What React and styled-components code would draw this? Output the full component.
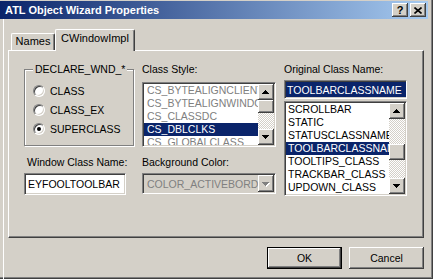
import React from "react";
import styled, { createGlobalStyle, css } from "styled-components";

const GlobalStyle = createGlobalStyle`
  html, body { margin: 0; padding: 0; background: #d4d0c8; }
  body { font-family: "Liberation Sans", Arial, sans-serif; }
  * { box-sizing: border-box; }
`;

const NAVY = "#0a246a";
const FACE = "#d4d0c8";

const raised = css`
  background: ${FACE};
  box-shadow: inset -1px -1px #404040, inset 1px 1px #fff, inset -2px -2px #808080, inset 2px 2px ${FACE};
`;

const sunken = css`
  border: 1px solid;
  border-color: #808080 #fff #fff #808080;
  box-shadow: inset 1px 1px #404040, inset -1px -1px ${FACE};
  padding: 1px;
`;

const Window = styled.div`
  width: 433px;
  height: 279px;
  padding-top: 1px;
  background: ${FACE};
  display: flex;
  flex-direction: column;
  box-shadow: inset -1px -1px #404040, inset -2px -2px #808080;
`;

const TitleBar = styled.div`
  height: 18px;
  margin-right: 5px;
  padding: 0 2px 0 5px;
  display: flex;
  align-items: center;
  background: linear-gradient(90deg, ${NAVY} 0%, #a6caf0 100%);
  color: #fff;
  font: bold 11px "Liberation Sans", Arial, sans-serif;
`;

const TitleText = styled.div`
  flex: 1;
  white-space: nowrap;
`;

const CaptionButton = styled.div`
  ${raised};
  width: 16px;
  height: 14px;
  margin-left: ${(p) => p.$gap || 0}px;
  display: flex;
  align-items: center;
  justify-content: center;
  color: #000;
  font: bold 11px "Liberation Sans", Arial, sans-serif;
  line-height: 14px;
`;

const Body = styled.div`
  flex: 1;
  margin-left: 3px;
  border-left: 1px solid #fff;
  padding: 10px 0 0 4px;
  display: flex;
  flex-direction: column;
`;

const TabStrip = styled.div`
  display: flex;
  align-items: flex-end;
  padding-left: 3px;
  height: 21px;
`;

const Tab = styled.div`
  width: ${(p) => p.$w}px;
  height: ${(p) => (p.$active ? 22 : 17)}px;
  margin-bottom: ${(p) => (p.$active ? -1 : 0)}px;
  padding-top: ${(p) => (p.$active ? 2 : 1)}px;
  position: relative;
  z-index: ${(p) => (p.$active ? 2 : 1)};
  background: ${FACE};
  border-top: 1px solid #fff;
  border-left: 1px solid #fff;
  border-right: 1px solid #404040;
  border-radius: 2px 2px 0 0;
  box-shadow: inset -1px 0 #808080;
  text-align: center;
  font-size: 11px;
  line-height: 13px;
  color: #000;
  white-space: nowrap;
`;

const Panel = styled.div`
  width: 416px;
  height: 188px;
  border-top: 1px solid #fff;
  border-left: 1px solid #fff;
  border-right: 1px solid #404040;
  border-bottom: 1px solid #404040;
  box-shadow: inset -1px -1px #808080;
  padding: 12px 0 0 15px;
  display: grid;
  grid-template-columns: 110px 134px 123px;
  column-gap: 8px;
  align-items: start;
`;

const Column = styled.div`
  display: flex;
  flex-direction: column;
  align-items: flex-start;
`;

const Label = styled.div`
  margin-top: ${(p) => p.$mt || 0}px;
  padding-left: ${(p) => p.$indent || 0}px;
  font-size: 10.5px;
  line-height: 13px;
  color: #000;
  white-space: nowrap;
`;

const GroupBox = styled.div`
  width: 110px;
  height: 77px;
  margin-top: 6px;
  border: 1px solid #808080;
  box-shadow: inset 1px 1px #fff, 1px 1px #fff;
  display: flex;
  flex-direction: column;
  align-items: flex-start;
`;

const GroupCaption = styled.div`
  margin: -7px 0 0 8px;
  padding: 0 2px;
  background: ${FACE};
  font-size: 10.5px;
  line-height: 13px;
  white-space: nowrap;
`;

const RadioList = styled.div`
  margin-top: 5px;
  padding-left: 8px;
  display: flex;
  flex-direction: column;
`;

const RadioRow = styled.div`
  height: 19px;
  display: flex;
  align-items: center;
  gap: 5px;
  font-size: 10.5px;
`;

const RadioCircle = styled.span`
  width: 12px;
  height: 12px;
  border-radius: 50%;
  border: 1px solid;
  border-color: #808080 #fff #fff #808080;
  box-shadow: inset 1px 1px #404040, inset -1px -1px ${FACE};
  background: #fff;
  display: flex;
  align-items: center;
  justify-content: center;
  &::after {
    content: "";
    width: 4px;
    height: 4px;
    border-radius: 50%;
    background: ${(p) => (p.$checked ? "#000" : "transparent")};
  }
`;

const Edit = styled.div`
  ${sunken};
  width: ${(p) => p.$w}px;
  height: ${(p) => p.$h}px;
  margin-top: ${(p) => p.$mt || 0}px;
  background: #fff;
  display: flex;
  align-items: ${(p) => (p.$sel ? "stretch" : "center")};
  padding-left: ${(p) => (p.$sel ? 1 : 3)}px;
  font-size: 10.5px;
  white-space: nowrap;
  overflow: hidden;
`;

const Selection = styled.span`
  background: ${NAVY};
  color: #fff;
  padding: 0 4px 0 1px;
  display: flex;
  align-items: center;
`;

const ListBox = styled.div`
  ${sunken};
  width: ${(p) => p.$w}px;
  height: ${(p) => p.$h}px;
  margin-top: ${(p) => p.$mt || 0}px;
  background: #fff;
  display: flex;
`;

const Items = styled.div`
  flex: 1;
  min-width: 0;
  overflow: hidden;
`;

const Item = styled.div`
  height: 13px;
  line-height: 13px;
  padding-left: ${(p) => p.$pad}px;
  font-size: 10.5px;
  white-space: nowrap;
  overflow: hidden;
  color: ${(p) => (p.$sel ? "#fff" : p.$color)};
  background: ${(p) => (p.$sel ? NAVY : "transparent")};
`;

const ScrollBar = styled.div`
  width: 16px;
  display: flex;
  flex-direction: column;
`;

const ScrollButton = styled.div`
  ${raised};
  width: 16px;
  height: 16px;
  flex: none;
  display: flex;
`;

const Thumb = styled.div`
  ${raised};
  height: ${(p) => p.$h}px;
  flex: none;
`;

const Track = styled.div`
  flex: ${(p) => (p.$h ? "none" : 1)};
  height: ${(p) => (p.$h ? `${p.$h}px` : "auto")};
  background: repeating-conic-gradient(#fff 0 25%, ${FACE} 0 50%) 0 0 / 2px 2px;
`;

const Combo = styled.div`
  ${sunken};
  width: 134px;
  height: 21px;
  margin-top: 4px;
  background: ${FACE};
  display: flex;
  align-items: stretch;
`;

const ComboText = styled.div`
  flex: 1;
  min-width: 0;
  padding-left: 3px;
  display: flex;
  align-items: center;
  font-size: 10.5px;
  color: #808080;
  white-space: nowrap;
  overflow: hidden;
`;

const ComboButton = styled.div`
  ${raised};
  width: 16px;
  flex: none;
  display: flex;
`;

const ButtonRow = styled.div`
  width: 416px;
  margin-top: 9px;
  display: flex;
  justify-content: flex-end;
  gap: 7px;
`;

const PushButton = styled.div`
  width: 75px;
  height: 22px;
  display: flex;
  align-items: center;
  justify-content: center;
  font-size: 10.5px;
  color: #000;
  background: ${FACE};
  ${(p) =>
    p.$default
      ? css`
          border: 1px solid #000;
          box-shadow: inset -1px -1px #404040, inset 1px 1px #fff, inset -2px -2px #808080;
        `
      : css`
          box-shadow: inset -1px -1px #404040, inset 1px 1px #fff, inset -2px -2px #808080, inset 2px 2px ${FACE};
        `}
`;

const ArrowSvg = ({ dir = "up", disabled }) => {
  const up = "M7 6h1v1h1v1h1v1h1v1H4V9h1V8h1V7h1z";
  const down = "M4 6h7v1h-1v1h-1v1h-1v1H7V9H6V8H5V7H4z";
  const d = dir === "up" ? up : down;
  return (
    <svg width="16" height="16" viewBox="0 0 16 16" shapeRendering="crispEdges" style={{ display: "block", margin: "auto" }}>
      {disabled && <path d={d} fill="#fff" transform="translate(1 1)" />}
      <path d={d} fill={disabled ? "#808080" : "#000"} />
    </svg>
  );
};

const CloseGlyph = () => (
  <svg width="8" height="7" viewBox="0 0 8 7">
    <path d="M0.5 0.5 L7.5 6.5 M7.5 0.5 L0.5 6.5" stroke="#000" strokeWidth="1.6" />
  </svg>
);

const classStyles = ["CS_BYTEALIGNCLIENT", "CS_BYTEALIGNWINDOW", "CS_CLASSDC", "CS_DBLCLKS", "CS_GLOBALCLASS"];
const classNames = ["SCROLLBAR", "STATIC", "STATUSCLASSNAME", "TOOLBARCLASSNAME", "TOOLTIPS_CLASS", "TRACKBAR_CLASS", "UPDOWN_CLASS"];
const radios = [
  { label: "CLASS", checked: false },
  { label: "CLASS_EX", checked: false },
  { label: "SUPERCLASS", checked: true },
];

export default function App() {
  return (
    <>
      <GlobalStyle />
      <Window>
        <TitleBar>
          <TitleText>ATL Object Wizard Properties</TitleText>
          <CaptionButton>?</CaptionButton>
          <CaptionButton $gap={2}>
            <CloseGlyph />
          </CaptionButton>
        </TitleBar>
        <Body>
          <TabStrip>
            <Tab $w={44}>Names</Tab>
            <Tab $w={80} $active>
              CWindowImpl
            </Tab>
          </TabStrip>
          <Panel>
            <Column>
              <GroupBox>
                <GroupCaption>DECLARE_WND_*</GroupCaption>
                <RadioList>
                  {radios.map((r) => (
                    <RadioRow key={r.label}>
                      <RadioCircle $checked={r.checked} />
                      {r.label}
                    </RadioRow>
                  ))}
                </RadioList>
              </GroupBox>
              <Label $mt={10} $indent={3}>
                Window Class Name:
              </Label>
              <Edit $w={102} $h={22} $mt={4}>
                EYFOOLTOOLBAR
              </Edit>
            </Column>
            <Column>
              <Label>Class Style:</Label>
              <ListBox $w={134} $h={65} $mt={6}>
                <Items>
                  {classStyles.map((s) => (
                    <Item key={s} $pad={3} $color="#808080" $sel={s === "CS_DBLCLKS"}>
                      {s}
                    </Item>
                  ))}
                </Items>
                <ScrollBar>
                  <ScrollButton>
                    <ArrowSvg dir="up" />
                  </ScrollButton>
                  <Thumb $h={13} />
                  <Track />
                  <ScrollButton>
                    <ArrowSvg dir="down" />
                  </ScrollButton>
                </ScrollBar>
              </ListBox>
              <Label $mt={9}>Background Color:</Label>
              <Combo>
                <ComboText>COLOR_ACTIVEBORDER</ComboText>
                <ComboButton>
                  <ArrowSvg dir="down" disabled />
                </ComboButton>
              </Combo>
            </Column>
            <Column>
              <Label>Original Class Name:</Label>
              <Edit $w={123} $h={19} $mt={4} $sel>
                <Selection>TOOLBARCLASSNAME</Selection>
              </Edit>
              <ListBox $w={123} $h={95} $mt={2}>
                <Items>
                  {classNames.map((s) => (
                    <Item key={s} $pad={2} $color="#000" $sel={s === "TOOLBARCLASSNAME"}>
                      {s}
                    </Item>
                  ))}
                </Items>
                <ScrollBar>
                  <ScrollButton>
                    <ArrowSvg dir="up" />
                  </ScrollButton>
                  <Track $h={25} />
                  <Thumb $h={16} />
                  <Track />
                  <ScrollButton>
                    <ArrowSvg dir="down" />
                  </ScrollButton>
                </ScrollBar>
              </ListBox>
            </Column>
          </Panel>
          <ButtonRow>
            <PushButton $default>OK</PushButton>
            <PushButton>Cancel</PushButton>
          </ButtonRow>
        </Body>
      </Window>
    </>
  );
}
